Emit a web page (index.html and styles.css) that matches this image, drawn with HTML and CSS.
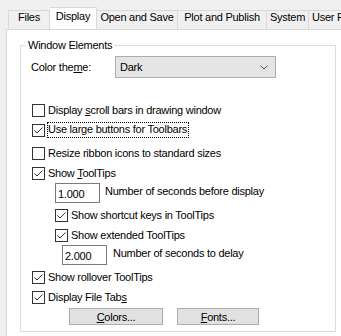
FILE: index.html
```html
<!DOCTYPE html>
<html lang="en">
<head>
    <meta charset="UTF-8">
    <title>Options - Display</title>
    <link rel="stylesheet" href="styles.css">
</head>
<body>
    <div class="tabs">
        <div class="tab tab-files">Files</div>
        <div class="tab tab-display active">Display</div>
        <div class="tab tab-open">Open and Save</div>
        <div class="tab tab-plot">Plot and Publish</div>
        <div class="tab tab-system">System</div>
        <div class="tab tab-user">User Preferences</div>
    </div>

    <div class="page">
        <fieldset class="group">
            <legend class="group-title">Window Elements</legend>

            <div class="theme-row">
                <span class="theme-label">Color the<u>m</u>e:</span>
                <div class="combo">
                    <span>Dark</span>
                    <svg class="chevron" width="8" height="5" viewBox="0 0 8 5">
                        <polyline points="0.5,0.5 4,4 7.5,0.5" fill="none" stroke="#555" stroke-width="1"/>
                    </svg>
                </div>
            </div>

            <!-- checkboxes -->
            <div class="check-row first">
                <span class="box"></span>
                <span class="check-text">Display <u>s</u>croll bars in drawing window</span>
            </div>
            <div class="check-row">
                <span class="box"><svg width="11" height="11" viewBox="0 0 11 11"><polyline points="1.5,5.5 4,8 9.5,2.5" fill="none" stroke="#333" stroke-width="1"/></svg></span>
                <span class="check-text focused">Use large buttons for Toolbars</span>
            </div>
            <div class="check-row gap-3">
                <span class="box"></span>
                <span class="check-text">Resize ribbon icons to standard sizes</span>
            </div>
            <div class="check-row">
                <span class="box"><svg width="11" height="11" viewBox="0 0 11 11"><polyline points="1.5,5.5 4,8 9.5,2.5" fill="none" stroke="#333" stroke-width="1"/></svg></span>
                <span class="check-text">Show <u>T</u>oolTips</span>
            </div>

            <div class="input-row">
                <div class="textbox">1.000</div>
                <span class="input-label">Number of seconds before display</span>
            </div>

            <div class="check-row nested gap-2">
                <span class="box"><svg width="11" height="11" viewBox="0 0 11 11"><polyline points="1.5,5.5 4,8 9.5,2.5" fill="none" stroke="#333" stroke-width="1"/></svg></span>
                <span class="check-text">Show shortcut keys in ToolTips</span>
            </div>
            <div class="check-row nested">
                <span class="box"><svg width="11" height="11" viewBox="0 0 11 11"><polyline points="1.5,5.5 4,8 9.5,2.5" fill="none" stroke="#333" stroke-width="1"/></svg></span>
                <span class="check-text">Show extended ToolTips</span>
            </div>

            <div class="input-row deep">
                <div class="textbox">2.000</div>
                <span class="input-label wide">Number of seconds to delay</span>
            </div>

            <div class="check-row gap-2">
                <span class="box"><svg width="11" height="11" viewBox="0 0 11 11"><polyline points="1.5,5.5 4,8 9.5,2.5" fill="none" stroke="#333" stroke-width="1"/></svg></span>
                <span class="check-text">Show rollover ToolTips</span>
            </div>
            <div class="check-row">
                <span class="box"><svg width="11" height="11" viewBox="0 0 11 11"><polyline points="1.5,5.5 4,8 9.5,2.5" fill="none" stroke="#333" stroke-width="1"/></svg></span>
                <span class="check-text">Display File Tab<u>s</u></span>
            </div>

            <div class="button-row">
                <button class="btn btn-colors"><u>C</u>olors...</button>
                <button class="btn btn-fonts"><u>F</u>onts...</button>
            </div>
        </fieldset>
    </div>
</body>
</html>
```

FILE: styles.css
```css
* {
    margin: 0;
    padding: 0;
    box-sizing: border-box;
}

body {
    font-family: "Liberation Sans", Arial, sans-serif;
    font-size: 11px;
    letter-spacing: -0.25px;
    color: #000;
    background-color: #f0f0f0;
    overflow: hidden;
    width: 341px;
    height: 336px;
}

u {
    text-decoration: underline;
    text-underline-offset: 1px;
}

/* Tab strip */
.tabs {
    display: flex;
    align-items: flex-end;
    height: 30px;
    margin-left: 6px;
    padding-left: 2px;
    border-bottom: 1px solid #d9d9d9;
    white-space: nowrap;
    overflow: hidden;
}

.tab {
    flex: none;
    height: 20px;
    margin-bottom: -1px;
    border-top: 1px solid #d9d9d9;
    border-right: 1px solid #d9d9d9;
    background-color: #f0f0f0;
    line-height: 13px;
    text-align: center;
}

.tab.active {
    height: 23px;
    padding-top: 2px;
    background-color: #fff;
}

.tab-files { width: 42px; border-left: 1px solid #d9d9d9; }
.tab-display { width: 47px; }
.tab-open { width: 81px; }
.tab-plot { width: 89px; }
.tab-system { width: 42px; }
.tab-user { width: 100px; text-align: left; padding-left: 3px; }

/* Tab page */
.page {
    background-color: #fff;
    margin-left: 6px;
    margin-right: -20px;
    height: 320px;
    border-left: 1px solid #d9d9d9;
    padding: 8px 0 0 13px;
}

.group {
    width: 316px;
    border: 1px solid #dcdcdc;
    padding: 0 0 6px 0;
}

.group-title {
    margin-left: 5px;
    padding: 0 2px;
    line-height: 15px;
}

/* Color theme */
.theme-row {
    display: flex;
    align-items: center;
    margin-top: 3px;
    padding-left: 10px;
    height: 22px;
}

.theme-label {
    width: 84px;
}

.combo {
    width: 161px;
    height: 22px;
    display: flex;
    align-items: center;
    justify-content: space-between;
    padding: 0 7px 0 4px;
    background-color: #e5e5e5;
    border: 1px solid #adadad;
}

.chevron {
    display: block;
}

/* Checkboxes */
.check-row {
    display: flex;
    align-items: center;
    height: 20px;
    padding-left: 11px;
}

.check-row.first { margin-top: 22px; }
.check-row.gap-2 { margin-top: 2px; }
.check-row.gap-3 { margin-top: 3px; }
.check-row.nested { padding-left: 34px; }

.box {
    width: 13px;
    height: 13px;
    border: 1px solid #333;
    background-color: #fff;
    flex: none;
}

.box svg {
    display: block;
}

.check-text {
    margin-left: 3px;
    line-height: 13px;
}

.check-text.focused {
    outline: 1px dotted #000;
    outline-offset: 0;
    padding: 0 1px 1px 0;
}

/* Number inputs */
.input-row {
    display: flex;
    align-items: flex-start;
    height: 20px;
    padding-left: 34px;
}

.input-row.deep {
    padding-left: 41px;
}

.textbox {
    width: 45px;
    height: 20px;
    border: 1px solid #7a7a7a;
    padding: 3px 0 0 2px;
    line-height: 14px;
    flex: none;
}

.input-label {
    margin-left: 5px;
    padding-top: 1px;
    line-height: 14px;
}

.input-label.wide {
    margin-left: 6px;
}

/* Buttons */
.button-row {
    display: flex;
    gap: 14px;
    margin-top: 1px;
    padding-left: 48px;
}

.btn {
    height: 17px;
    font-family: inherit;
    font-size: 11px;
    letter-spacing: inherit;
    color: #000;
    background-color: #e1e1e1;
    border: 1px solid #adadad;
    line-height: 14px;
}

.btn-colors { width: 94px; }
.btn-fonts { width: 82px; }
```
